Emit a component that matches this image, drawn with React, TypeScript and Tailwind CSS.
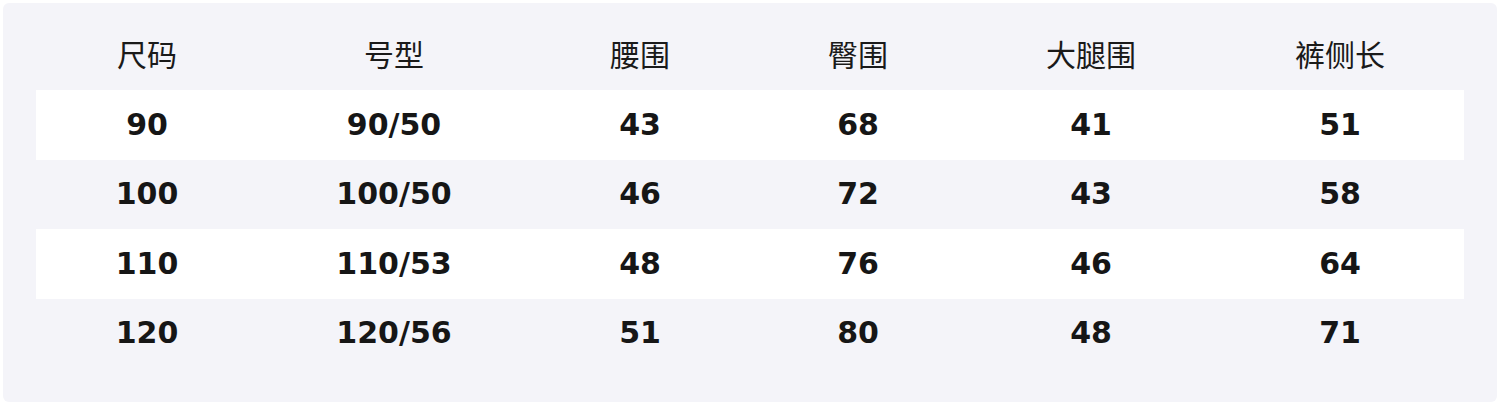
import React from "react";

const headers = ["尺码", "号型", "腰围", "臀围", "大腿围", "裤侧长"];
const rows = [
  ["90", "90/50", "43", "68", "41", "51"],
  ["100", "100/50", "46", "72", "43", "58"],
  ["110", "110/53", "48", "76", "46", "64"],
  ["120", "120/56", "51", "80", "48", "71"],
];

export default function App() {
  return (
    <div className="w-[1500px] h-[405px] bg-white p-[3px]">
      <div className="h-[399px] rounded-[6px] bg-[#f4f4f9] px-[33px] pt-[18px] pb-[34px]">
        <div className="grid grid-cols-[222px_272px_220px_216px_250px_248px]">
          {headers.map((h) => (
            <div
              key={h}
              className="h-[69px] pb-[6px] flex items-center justify-center text-[30px] text-[#1a1a1a] font-normal leading-none"
              style={{ fontFamily: '"Noto Sans CJK SC", "Noto Sans", sans-serif' }}
            >
              {h}
            </div>
          ))}
        </div>
        {rows.map((r, i) => (
          <div
            key={i}
            className={
              "grid grid-cols-[222px_272px_220px_216px_250px_248px] h-[69.5px] " +
              (i % 2 === 0 ? "bg-white" : "bg-transparent")
            }
          >
            {r.map((c, j) => (
              <div
                key={j}
                className="flex items-center justify-center text-[30px] font-bold text-[#161616] leading-none"
                style={{ fontFamily: '"DejaVu Sans", sans-serif' }}
              >
                {c}
              </div>
            ))}
          </div>
        ))}
      </div>
    </div>
  );
}
